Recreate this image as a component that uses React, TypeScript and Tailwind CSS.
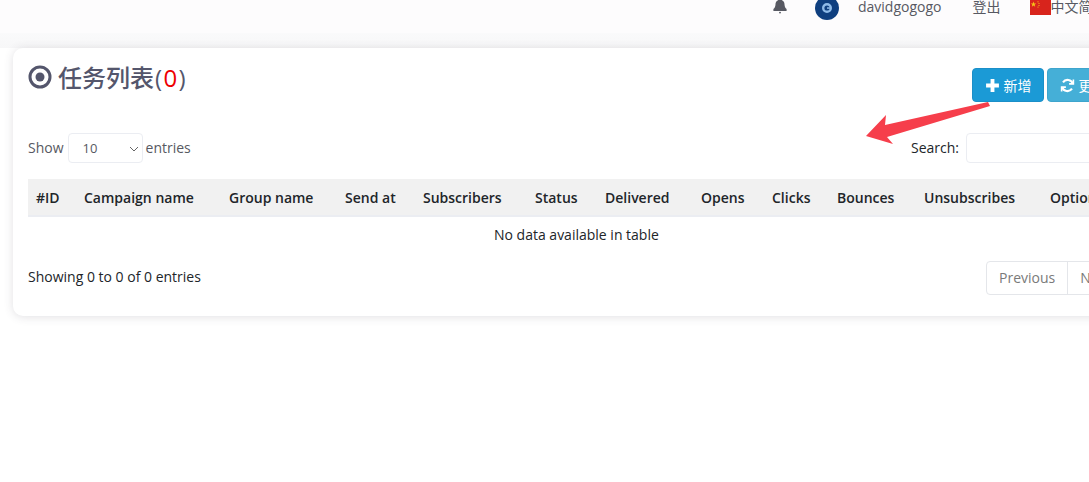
import React from "react";

const OS = "font-['Open_Sans','Noto_Sans_CJK_SC',sans-serif]";

const cols: [string, string][] = [
  ["#ID", "w-[48px]"],
  ["Campaign name", "w-[145px]"],
  ["Group name", "w-[116px]"],
  ["Send at", "w-[78px]"],
  ["Subscribers", "w-[112px]"],
  ["Status", "w-[70px]"],
  ["Delivered", "w-[96px]"],
  ["Opens", "w-[71px]"],
  ["Clicks", "w-[65px]"],
  ["Bounces", "w-[87px]"],
  ["Unsubscribes", "w-[126px]"],
  ["Options", "w-[80px]"],
];

function Flag() {
  return (
    <svg width="21" height="15" viewBox="0 0 21 15" className="shrink-0">
      <rect width="21" height="15" fill="#d8241c" />
      <path d="M3.500 1.500l.7 2h2l-1.600 1.200.6 2-1.700-1.200-1.700 1.200.6-2L.8 3.500h2z" fill="#f5c518" />
      <circle cx="8" cy="1.800" r=".6" fill="#f5c518" />
      <circle cx="9" cy="3.500" r=".6" fill="#f5c518" />
      <circle cx="9" cy="5.500" r=".6" fill="#f5c518" />
      <circle cx="8" cy="7" r=".6" fill="#f5c518" />
    </svg>
  );
}

export default function App() {
  return (
    <div className={`relative w-[1089px] h-[482px] overflow-hidden bg-white ${OS}`}>
      <header className="h-[33px] bg-[#fdfcfd] flex items-start pl-[772px] text-[14px] leading-[13px] text-[#575962] whitespace-nowrap">
        <svg width="16" height="16" viewBox="0 0 17 16" className="shrink-0 -mt-[2px]">
          <path d="M8.500 0C10 0 10.400.8 10.600 2c2 .8 2.600 2.400 2.700 4.400.1 2.500.9 3.600 2.200 4.800v2H1.500v-2c1.300-1.200 2.100-2.300 2.200-4.800C3.800 4.400 4.400 2.800 6.400 2 6.600.8 7 0 8.500 0z" fill="#575962" />
          <circle cx="8.500" cy="15" r="1" fill="#575962" />
        </svg>
        <svg width="24" height="24" viewBox="0 0 24 24" className="shrink-0 ml-[27px] -mt-[4px]">
          <circle cx="12" cy="12" r="12" fill="#0f3f7f" />
          <circle cx="12" cy="12" r="3.800" fill="none" stroke="#8fbbe8" strokeWidth="2.400" />
          <rect x="12" y="11.300" width="4" height="1.500" fill="#8fbbe8" />
        </svg>
        <span className="ml-[19px]">davidgogogo</span>
        <span className="ml-[31px]">登出</span>
        <span className="ml-[29px] flex items-start">
          <Flag />
          <span>中文简体</span>
        </span>
      </header>
      <div className="h-[15px] bg-gradient-to-b from-[#fafafb] to-[#f7f7f8]" />

      <main className="absolute left-[13px] top-[48px] w-[1142px] h-[268px] bg-white rounded-[10px] shadow-[0_1px_10px_rgba(69,65,78,0.16)] px-[15px]">
        <div className="flex items-start justify-between h-[71px]">
          <h1 className="relative flex items-center mt-[14px] text-[24px] leading-[32px] font-medium text-[#54566c]">
            <svg width="24" height="24" viewBox="0 0 24 24" className="mr-[6px] shrink-0 -mt-[2px]">
              <circle cx="12" cy="12" r="10" fill="none" stroke="#54566c" strokeWidth="3" />
              <circle cx="12" cy="12" r="4.500" fill="#54566c" />
            </svg>
            <span>任务列表<span className="tracking-[1.400px] ml-[1px]">(<span className="text-[#ee0000]">0</span>)</span></span>
          </h1>
          <div className="flex gap-[3px] mt-[20px] pr-[21px] text-white text-[14px] whitespace-nowrap">
            <button className="w-[72px] h-[34px] rounded-[4px] bg-[#1b9ad6] border border-[#1b8fc8] flex items-center justify-center gap-[4px]">
              <svg width="15" height="15" viewBox="0 0 14 14"><path d="M5.200 1h3.600v4.200H13v3.600H8.800V13H5.200V8.800H1V5.200h4.200z" fill="#fff" /></svg>
              <span>新增</span>
            </button>
            <button className="w-[72px] h-[34px] rounded-[4px] bg-[#45afd7] border border-[#3ea5cd] flex items-center justify-center gap-[4px]">
              <svg width="15" height="15" viewBox="0 0 14 14" fill="none" stroke="#fff" strokeWidth="2"><path d="M12 5.500A5.200 5.200 0 0 0 2.800 4M2 8.500A5.200 5.200 0 0 0 11.200 10" /><path d="M12.500 1.500v4h-4M1.500 12.500v-4h4" strokeWidth="1.500" /></svg>
              <span>更新</span>
            </button>
          </div>
        </div>

        <div className="flex items-center justify-between h-[30px] mt-[14px] text-[14px] text-[#575962]">
          <div className="flex items-center">
            <span className="-mt-[2px]">Show</span>
            <span className="relative ml-[4px] mr-[3px] w-[75px] h-[30px] border border-[#ebedf2] rounded-[4px] text-[13px] flex items-center pl-[14px] text-[#575962]">
              <span className="mt-[1px]">10</span>
              <svg width="10" height="6" viewBox="0 0 10 6" className="absolute right-[3px] top-[12px]" fill="none" stroke="#666" strokeWidth="1"><path d="M1 1l4 4 4-4" /></svg>
            </span>
            <span className="-mt-[2px]">entries</span>
          </div>
          <div className="flex items-center text-[#212529]">
            <span className="mr-[7px] -mt-[2px]">Search:</span>
            <span className="w-[174px] h-[30px] border border-[#ebedf2] rounded-[4px]" />
          </div>
        </div>

        <table className="mt-[16px] w-[1094px] table-fixed border-collapse text-[14px] text-[#212529]">
          <thead>
            <tr className="bg-[#f1f1f1] border-b-2 border-[#ebedf2] h-[37px]">
              {cols.map(([label, w]) => (
                <th key={label} className={`${w} px-[8px] text-left font-[550] whitespace-nowrap`}>{label}</th>
              ))}
            </tr>
          </thead>
          <tbody>
            <tr className="h-[36px]">
              <td colSpan={12} className="text-left pl-[466px]">No data available in table</td>
            </tr>
          </tbody>
        </table>

        <div className="flex items-start justify-between mt-[14px] text-[14px] text-[#212529]">
          <span className="leading-[22px]">Showing 0 to 0 of 0 entries</span>
          <div className="flex mr-[16px] -mt-[5px] h-[34px] text-[#7a7a7a] border border-[#e4e6ea] rounded-[4px] leading-[32px]">
            <span className="px-[12px] border-r border-[#e4e6ea]">Previous</span>
            <span className="px-[12px]">Next</span>
          </div>
        </div>
      </main>

      <svg className="absolute left-[860px] top-[98px]" width="135" height="50" viewBox="0 0 135 50">
        <path d="M128 4 L130 8 L27 39 L33 46 L6 38 L26 17 L25 27 Z" fill="#f63e4b" />
      </svg>
    </div>
  );
}
